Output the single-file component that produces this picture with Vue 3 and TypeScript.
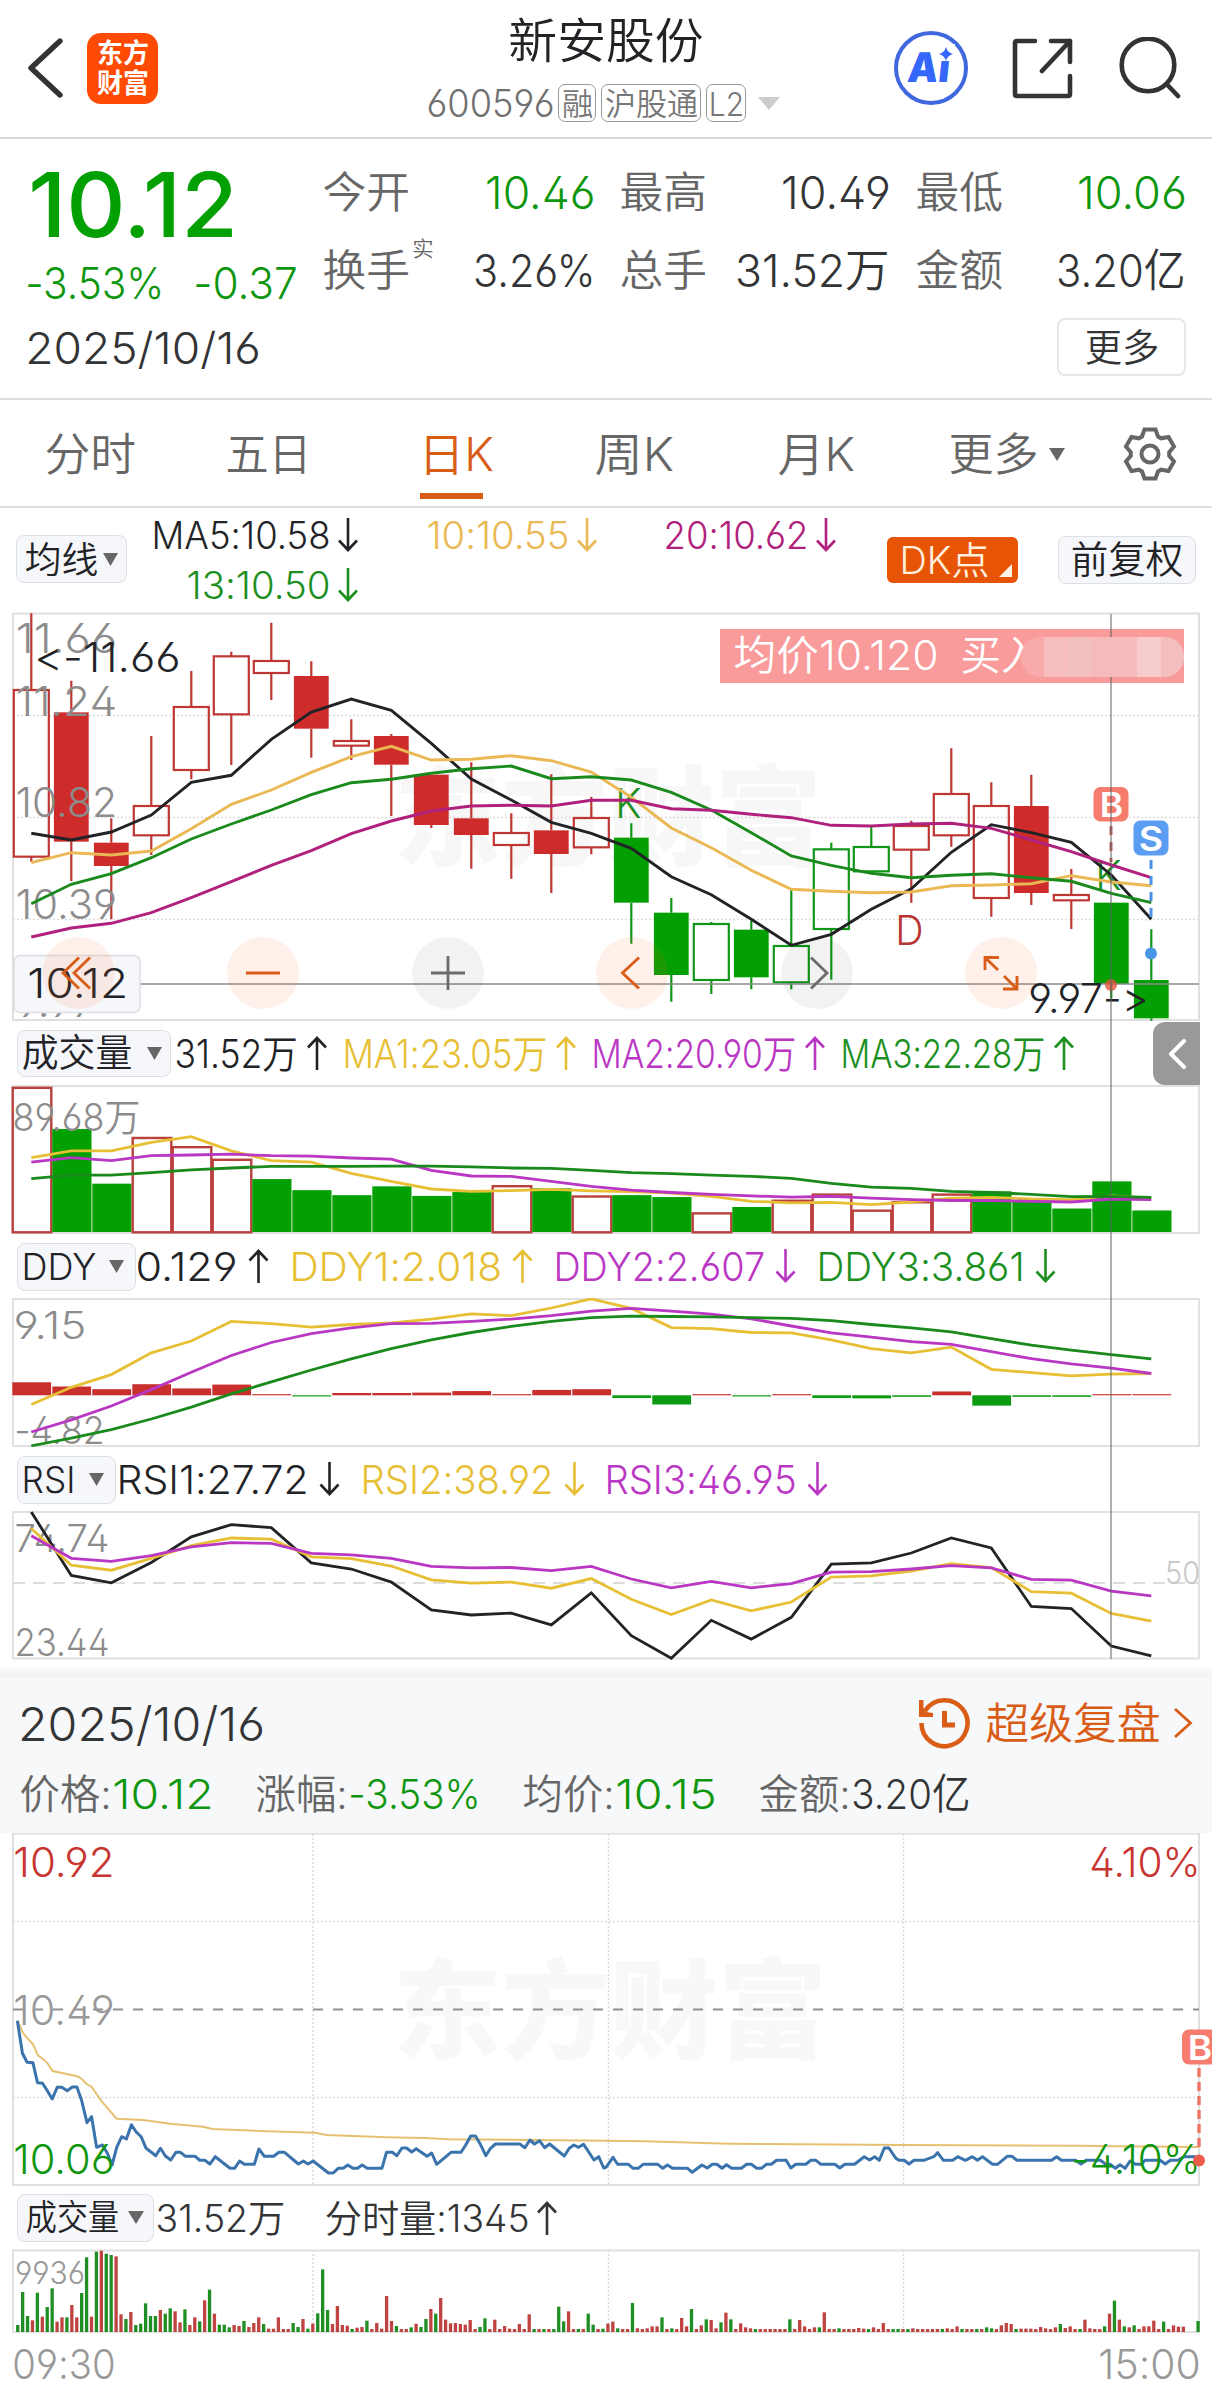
<script setup lang="ts">
import { h } from 'vue'

const GREEN = '#0f960f'
const INK = '#222326'
const TEXT = '#333436'
const GREY = '#666'
const AXIS = '#8c8c8c'
const GOLD = '#e7bf35'
const AMBER = '#eab854'
const VIOLET = '#b937c3'
const PLUM = '#b0207c'
const ORANGE = '#d95c17'
const LEAF = '#1c8f1f'

interface TextProps {
  t: string
  w: number
  s: number
  x?: number
  y?: number
  c?: string
  b?: number
}

/* Side bearing of a glyph, as a fraction of the font size */
const bearing = (ch: string) => (/[\u4e00-\u9fff]/.test(ch) ? 0.035 : 0.065)

/* Text fitted to a width; x is the visible left edge and y the baseline. */
const T = (p: TextProps) => {
  const left = bearing(p.t[0]) * p.s
  const right = bearing(p.t[p.t.length - 1]) * p.s
  return h(
    'text',
    {
      x: (p.x ?? 0) - left,
      y: p.y ?? 0,
      'font-size': p.s,
      'font-weight': p.b ?? 350,
      fill: p.c ?? INK,
      textLength: p.w + left + right,
      lengthAdjust: 'spacingAndGlyphs',
    },
    p.t,
  )
}
T.props = ['t', 'w', 's', 'x', 'y', 'c', 'b']

/* The same text as a box that takes part in the surrounding layout. */
const Label = (p: TextProps) =>
  h('svg', { width: p.w, height: p.s, style: { display: 'block', overflow: 'visible', flex: 'none' } }, [
    h(T, { ...p, x: 0, y: p.s * 0.8635 }),
  ])
Label.props = ['t', 'w', 's', 'c', 'b']

const Arrow = (p: { up?: boolean; c: string; w?: number }) =>
  h('svg', { width: p.w ?? 20, height: 34, viewBox: '0 0 20 34', style: { display: 'block', flex: 'none' } }, [
    h('path', {
      d: p.up ? 'M10 34V2M1 11.5L10 2L19 11.5' : 'M10 0V32M1 22.5L10 32L19 22.5',
      fill: 'none',
      stroke: p.c,
      'stroke-width': 2.6,
    }),
  ])
Arrow.props = ['up', 'c', 'w']

const Caret = (p: { c?: string; w?: number }) =>
  h('svg', { width: p.w ?? 15, height: 13, viewBox: '0 0 15 13', preserveAspectRatio: 'none', style: { display: 'block', flex: 'none' } }, [
    h('path', { d: 'M0 0H15L7.5 13Z', fill: p.c ?? GREY }),
  ])
Caret.props = ['c', 'w']

const cx = (i: number) => 31.3 + 40 * i
const line = (ys: number[], base: number, k: number) =>
  ys.map((v, i) => `${cx(i).toFixed(1)},${(base + v / k).toFixed(1)}`).join(' ')

/* high, body top, body bottom, low, kind (upper case = filled) */
type Candle = [number, number, number, number, string]
const rawCandles: Candle[] = [
  [40, 270, 770, 785, 'r'], [242, 337, 725, 843, 'R'], [655, 728, 798, 958, 'R'], [408, 618, 706, 765, 'r'],
  [213, 321, 510, 538, 'r'], [155, 169, 343, 495, 'r'], [68, 183, 219, 300, 'r'], [184, 228, 386, 473, 'R'],
  [358, 423, 437, 480, 'r'], [402, 408, 494, 648, 'R'], [524, 524, 675, 684, 'R'], [487, 655, 705, 806, 'R'],
  [640, 699, 735, 836, 'r'], [523, 691, 762, 879, 'R'], [590, 654, 742, 763, 'r'], [670, 713, 908, 1031, 'G'],
  [894, 938, 1125, 1205, 'G'], [966, 972, 1140, 1182, 'g'], [963, 989, 1132, 1168, 'G'], [870, 1038, 1147, 1168, 'g'],
  [728, 748, 987, 1139, 'g'], [678, 741, 814, 814, 'g'], [662, 678, 749, 908, 'r'], [445, 582, 706, 740, 'r'],
  [547, 618, 894, 950, 'r'], [524, 618, 879, 915, 'R'], [807, 885, 901, 987, 'r'], [908, 908, 1152, 1196, 'G'],
  [988, 1140, 1255, 1262, 'G'],
]
const candles = rawCandles.map(([hi, top, bot, lo, k], i) => {
  const filled = k === k.toUpperCase()
  const red = k.toLowerCase() === 'r'
  return {
    x: cx(i),
    hi: 600 + hi / 3,
    top: 600 + top / 3,
    bot: 600 + bot / 3,
    lo: 600 + lo / 3,
    filled,
    stroke: red ? '#bf3733' : '#12961a',
    fill: red ? '#ce2b2b' : '#02a002',
  }
})

const maLines = [
  { c: INK, p: line([700, 720, 696, 645, 547, 526, 418, 336, 297, 331, 430, 537, 600, 667, 700, 745, 830, 884, 958, 1036, 1003, 928, 866, 757, 674, 698, 727, 825, 958], 600, 3) },
  { c: AMBER, p: line([788, 758, 765, 753, 686, 613, 570, 517, 470, 439, 480, 478, 467, 482, 516, 592, 684, 743, 811, 868, 874, 878, 876, 857, 855, 851, 827, 846, 857], 600, 3) },
  { c: '#1a8a1d', p: line([911, 853, 821, 773, 717, 672, 630, 584, 548, 538, 520, 506, 498, 536, 530, 540, 577, 630, 698, 768, 796, 820, 833, 826, 821, 833, 844, 880, 908], 600, 3) },
  { c: PLUM, p: line([1011, 984, 970, 938, 893, 845, 796, 752, 701, 663, 633, 618, 616, 618, 601, 601, 626, 631, 643, 653, 676, 678, 672, 670, 685, 720, 755, 795, 833], 600, 3) },
]

const K = 2.613
const volBars = 'r44 g154 g297 r175 r199 r232 g285 g314 g327 g304 g329 g319 r301 g309 r328 g327 g332 r372 g358 r339 r323 r365 r343 r323 g317 g340 g362 g291 g367'
  .split(' ')
  .map((s, i) => ({ x: cx(i) - 18.8, y: 1070 + Number(s.slice(1)) / K, red: s[0] === 'r' }))
const volLines = [
  { c: GOLD, p: line([229, 211, 211, 189, 174, 211, 237, 241, 270, 291, 311, 317, 315, 312, 316, 318, 322, 330, 343, 347, 346, 352, 345, 335, 333, 337, 339, 329, 335], 1070, K) },
  { c: VIOLET, p: line([241, 229, 237, 224, 222, 220, 224, 225, 230, 233, 262, 277, 278, 291, 304, 314, 320, 325, 329, 332, 330, 335, 339, 341, 341, 343, 345, 337, 339], 1070, K) },
  { c: '#1a8a1d', p: line([284, 275, 275, 268, 261, 256, 252, 252, 252, 251, 251, 253, 256, 257, 262, 268, 271, 275, 278, 283, 296, 306, 309, 317, 320, 325, 331, 330, 333], 1070, K) },
]

const ddyBars = [34, 23, 16, 29, 18, 28, 3, -3, 6, 6, 7, 11, 3, 14, 16, -7, -24, 3, -3, 3, -7, -8, -4, 10, -27, -4, -4, 3, 3].map((v, i) => ({
  x: cx(i) - 19,
  y: 1395.3 - Math.max(v, 0) / K,
  h: Math.abs(v) / K,
  c: v > 0 ? '#c92f2d' : '#0b9a10',
}))
const ddyLines = [
  { c: GOLD, p: line([874, 829, 796, 739, 708, 657, 663, 672, 665, 661, 651, 637, 642, 622, 598, 623, 673, 676, 686, 687, 705, 728, 739, 724, 782, 791, 799, 795, 793], 1070, K) },
  { c: VIOLET, p: line([946, 914, 878, 835, 790, 746, 712, 689, 674, 663, 662, 657, 651, 642, 630, 623, 630, 638, 650, 669, 687, 698, 710, 717, 736, 754, 768, 779, 793], 1070, K) },
  { c: '#1a8a1d', p: line([982, 962, 940, 912, 881, 846, 815, 784, 755, 728, 705, 686, 670, 657, 647, 643, 644, 645, 647, 649, 655, 665, 674, 684, 702, 719, 732, 744, 755], 1070, K) },
]
const rsiLines = [
  { c: INK, p: line([1155, 1321, 1340, 1287, 1220, 1188, 1196, 1288, 1304, 1338, 1411, 1424, 1419, 1450, 1366, 1478, 1537, 1438, 1487, 1430, 1291, 1288, 1262, 1223, 1249, 1402, 1407, 1505, 1531], 1070, K) },
  { c: GOLD, p: line([1198, 1294, 1307, 1276, 1243, 1223, 1226, 1272, 1277, 1296, 1332, 1341, 1338, 1354, 1329, 1383, 1423, 1385, 1413, 1390, 1325, 1322, 1309, 1290, 1300, 1363, 1367, 1420, 1440], 1070, K) },
  { c: VIOLET, p: line([1217, 1276, 1284, 1269, 1246, 1235, 1237, 1263, 1267, 1276, 1297, 1301, 1300, 1308, 1297, 1330, 1353, 1336, 1353, 1342, 1312, 1311, 1304, 1295, 1301, 1331, 1333, 1362, 1374], 1070, K) },
]

/* Intraday series: pairs of x and y in chart units */
const trace = (s: string) =>
  s
    .split(' ')
    .map((q) => {
      const [a, b] = q.split(',').map(Number)
      return `${(a / 2.5874).toFixed(1)},${(2030 + b / 3).toFixed(1)}`
    })
    .join(' ')
const priceLine = trace(
  '45,-28 58,70 70,97 85,98 97,158 110,160 123,183 135,207 148,172 160,172 174,182 187,171 199,171 211,210 225,278 237,260 250,352 265,345 278,370 290,405 302,352 315,320 327,327 340,284 352,305 365,320 378,355 390,365 403,377 415,355 428,378 442,390 455,367 467,367 480,379 505,379 517,391 530,391 543,402 557,380 595,415 607,415 620,393 632,403 658,403 670,357 684,379 708,379 722,367 736,367 772,402 785,393 797,402 810,393 850,429 862,429 875,415 888,415 900,405 913,415 925,415 937,405 950,415 988,415 1000,367 1015,367 1027,377 1040,354 1052,354 1065,366 1077,356 1105,379 1117,369 1130,403 1167,367 1193,367 1205,345 1218,318 1230,318 1243,343 1257,377 1269,355 1282,342 1345,342 1358,353 1371,330 1383,342 1396,332 1409,353 1422,342 1460,378 1473,355 1485,345 1497,352 1510,343 1537,390 1549,380 1562,414 1568,412 1586,382 1598,403 1626,403 1638,415 1651,415 1664,403 1702,403 1715,415 1727,405 1740,415 1779,415 1791,427 1816,405 1830,414 1843,403 1855,403 1868,415 1880,404 1893,415 1918,415 1932,403 1944,403 1958,415 1970,415 1983,403 1996,403 2009,391 2034,391 2046,414 2059,403 2085,403 2098,391 2111,391 2124,403 2160,403 2173,414 2186,403 2211,403 2236,380 2250,390 2263,380 2275,391 2288,354 2300,354 2318,385 2326,391 2340,391 2352,402 2365,391 2390,391 2416,380 2426,368 2441,391 2465,391 2478,380 2498,391 2516,380 2529,391 2542,380 2568,403 2581,403 2606,379 2618,379 2631,391 2721,391 2734,380 2746,391 2783,391 2797,402 2810,391 2848,391 2861,403 2873,403 2886,415 2898,404 2911,415 2924,393 2938,403 2953,403 2963,391 3002,391 3015,402 3028,391 3048,391 3063,380 3093,380 3102,391',
)
const avgLine = trace(
  '45,-28 60,10 75,30 85,42 98,76 112,88 123,100 136,123 200,139 211,146 225,163 237,170 262,213 302,266 370,270 440,281 525,290 550,297 690,304 815,308 845,315 1000,322 1100,324 1160,328 1568,332 1668,334 1888,341 2068,343 2338,345 2798,347 2888,349 3102,351',
)
const minuteBars = (
  'g885 g786 g858 r871 g788 r860 g831 g775 r875 r862 g862 r825 r862 g789 g682 r860 g665 r662 g671 g675 r679 r853 g867 r846 g885 g881 g820 g858 g858 r840 g851 g835 r844 r877 g838 r885 r862 g874 r811 g779 r851 g884 g884 g892 r885 r888 g873 r891 r879 r862 g882 r896 r896 r862 r897 r897 g879 g891 r867 g896 ' +
  'r881 g850 g718 g840 r882 r828 r885 r887 g897 r893 r891 g872 r897 r879 r896 r798 r873 g888 r897 r897 g892 r881 g891 g867 r837 g851 r804 r869 r880 r879 r882 r884 r870 r897 g891 g865 r897 r869 r897 r888 r896 r897 r882 r897 r853 g897 r897 g897 r897 g897 g830 g874 r844 r897 g897 r897 g851 g884 r897 g896 ' +
  'r881 r875 g895 r897 r897 g819 r895 r897 r895 r889 r889 g862 r897 g895 r897 r864 r889 g837 r897 r886 g868 r870 r895 g877 r848 g868 r897 r880 r892 r895 g897 r897 r897 r897 r897 r897 r897 g868 r897 r870 r889 r897 r892 g892 r847 r897 r897 g895 r897 r897 r897 r894 r896 g897 r892 r897 r879 r897 g897 g897 ' +
  'r897 g897 r895 r897 r897 r897 r897 r897 g897 r895 r897 r889 g897 r897 r897 g897 r897 g892 g895 r897 r886 r879 r882 g897 r896 r896 r896 r897 r891 r895 r897 r892 g882 r894 r889 r897 g897 r869 r895 r897 r897 g889 r851 g812 r869 g889 r892 g886 r897 r889 r889 r872 r897 g875 r897 r886 r890 r890 r906 r906 g873'
)
  .split(' ')
  .map((s, i) => {
    const v = Number(s.slice(1))
    return { x: (46 + 12.725 * i) / 2.5874 - 1.7, y: 2030 + v / 3, h: (906 - v) / 3, c: s[0] === 'r' ? '#bf4340' : '#1f8f24' }
  })

const gear = Array.from({ length: 6 }, (_, i) => {
  const rot = ((i * 60 - 90) * Math.PI) / 180
  return [[-8, 17.5], [-5.5, 24.5], [5.5, 24.5], [8, 17.5]]
    .map(([t, r]) => `${(28 + r * Math.cos(rot) - t * Math.sin(rot)).toFixed(1)},${(28 + r * Math.sin(rot) + t * Math.cos(rot)).toFixed(1)}`)
    .join(' ')
}).join(' ')

const axisMain: [string, number][] = [['11.66', 653], ['11.24', 715.5], ['10.82', 817], ['10.39', 919], ['9.97', 1017]]

const quotes = [
  { l: '今开', v: '10.46', w: 104.5, c: GREEN },
  { l: '最高', v: '10.49', w: 104, c: TEXT },
  { l: '最低', v: '10.06', w: 104, c: GREEN },
  { l: '换手', v: '3.26%', w: 116.5, c: TEXT, sup: '实' },
  { l: '总手', v: '31.52万', w: 150, c: TEXT },
  { l: '金额', v: '3.20亿', w: 125, c: TEXT },
]
const volLegend = [
  { t: '31.52万', w: 119.5, c: INK },
  { t: 'MA1:23.05万', w: 201, c: GOLD },
  { t: 'MA2:20.90万', w: 201, c: VIOLET },
  { t: 'MA3:22.28万', w: 201, c: LEAF },
]
const ddyLegend = [
  { t: '0.129', w: 97, c: INK, up: true },
  { t: 'DDY1:2.018', w: 207.5, c: GOLD, up: true },
  { t: 'DDY2:2.607', w: 206.5, c: VIOLET, up: false },
  { t: 'DDY3:3.861', w: 203, c: LEAF, up: false },
]
const rsiLegend = [
  { t: 'RSI1:27.72', w: 187, c: INK },
  { t: 'RSI2:38.92', w: 188, c: GOLD },
  { t: 'RSI3:46.95', w: 187, c: VIOLET },
]
const summary = [
  { l: '价格:', v: '10.12', w: 96, c: GREEN },
  { l: '涨幅:', v: '-3.53%', w: 127, c: GREEN },
  { l: '均价:', v: '10.15', w: 96, c: GREEN },
  { l: '金额:', v: '3.20亿', w: 115, c: TEXT },
]
</script>

<template>
  <main class="page">
    <header class="header">
      <svg class="back" width="36" height="62" viewBox="0 0 36 62"><path d="M33 4L4 31L33 58" fill="none" stroke="#333" stroke-width="5.4" stroke-linecap="round" stroke-linejoin="round" /></svg>
      <div class="logo">
        <Label t="东方" :w="50" :s="27" c="#fff" :b="700" />
        <Label t="财富" :w="50" :s="27" c="#fff" :b="700" />
      </div>
      <div class="title">
        <Label t="新安股份" :w="192" :s="48" />
        <div class="code">
          <Label t="600596" :w="123" :s="38" c="#707070" />
          <span class="tags">
            <span class="tag"><Label t="融" :w="29" :s="31" c="#777" /></span>
            <span class="tag"><Label t="沪股通" :w="91" :s="31" c="#777" /></span>
            <span class="tag"><Label t="L2" :w="31" :s="33" c="#777" /></span>
          </span>
          <Caret c="#ccc" :w="22" />
        </div>
      </div>
      <div class="tools">
        <svg width="76" height="76" viewBox="0 0 76 76">
          <circle cx="38" cy="38" r="35" fill="none" stroke="#4068de" stroke-width="4" />
          <g transform="skewX(-6)">
            <text x="19" y="52" font-size="41" font-weight="900" fill="#3567fb" textLength="42" lengthAdjust="spacingAndGlyphs">Ai</text>
          </g>
          <path d="M45 14H62V31H45Z" fill="#fff" />
          <path d="M53 17Q54.5 22.500 60 24Q54.500 25.500 53 31Q51.500 25.500 46 24Q51.500 22.500 53 17Z" fill="#3567fb" />
        </svg>
        <svg width="62" height="62" viewBox="0 0 62 62" fill="none" stroke="#333" stroke-width="4.6" stroke-linecap="round" stroke-linejoin="round"><path d="M24 4H6Q4 4 4 6V57Q4 59 6 59H57Q59 59 59 57V39M40 4H59V25M59 4L31 34" /></svg>
        <svg width="62" height="62" viewBox="0 0 62 62" fill="none" stroke="#333" stroke-width="4.600" stroke-linecap="round"><circle cx="29" cy="28" r="26.300" /><path d="M47.500 47L59 59" /></svg>
      </div>
    </header>

    <section class="quote">
      <div class="price">
        <div class="big"><Label t="10.12" :w="198" :s="90" c="#02a002" :b="530" /></div>
        <div class="change">
          <Label t="-3.53%" :w="133.500" :s="43" :c="GREEN" />
          <Label t="-0.37" :w="99" :s="43" :c="GREEN" />
        </div>
        <Label t="2025/10/16" :w="230" :s="44" :c="TEXT" />
      </div>
      <div class="stats">
        <div v-for="q in quotes" :key="q.l" class="stat">
          <div class="stat-name">
            <Label :t="q.l" :w="84.500" :s="43" :c="GREY" />
            <Label v-if="q.sup" class="sup" :t="q.sup" :w="20" :s="21" :c="GREY" />
          </div>
          <Label :t="q.v" :w="q.w" :s="45" :c="q.c" />
        </div>
        <button class="more"><Label t="更多" :w="72" :s="38" :c="TEXT" /></button>
      </div>
    </section>

    <nav class="tabs">
      <Label t="分时" :w="88.500" :s="45" :c="GREY" />
      <Label t="五日" :w="83" :s="45" :c="GREY" />
      <div class="tab-on"><Label t="日K" :w="71" :s="46" :c="ORANGE" /></div>
      <Label t="周K" :w="75" :s="46" :c="GREY" />
      <Label t="月K" :w="73" :s="46" :c="GREY" />
      <div class="tab-more"><Label t="更多" :w="87" :s="45" :c="GREY" /><Caret :w="16" /></div>
      <svg class="gear" width="56" height="56" viewBox="0 0 56 56" fill="none" stroke="#666" stroke-width="4"><polygon :points="gear" /><circle cx="28" cy="28" r="8.500" /></svg>
    </nav>

    <section class="kline">
      <div class="ma-row">
        <button class="pick pick-ma"><Label t="均线" :w="71" :s="36.500" /><Caret /></button>
        <div class="ma-grid">
          <span class="leg"><Label t="MA5:10.58" :w="174" :s="38" /><Arrow :c="INK" /></span>
          <span class="leg"><Label t="10:10.55" :w="138" :s="38" :c="AMBER" /><Arrow :c="AMBER" /></span>
          <span class="leg"><Label t="20:10.62" :w="140" :s="38" :c="PLUM" /><Arrow :c="PLUM" /></span>
          <span class="leg"><Label t="13:10.50" :w="139" :s="38" :c="LEAF" /><Arrow :c="LEAF" /></span>
        </div>
        <button class="dk"><Label t="DK点" :w="86" :s="38" c="#ffefdd" /><svg class="corner" width="13" height="13"><path d="M13 0V13H0Z" fill="#fff3e6" /></svg></button>
        <button class="pick fq"><Label t="前复权" :w="110" :s="37.500" /></button>
      </div>

      <svg class="chart" width="1212" height="410" viewBox="0 612 1212 410">
        <T t="东方财富" :x="398" :y="857" :w="420" :s="108" :b="900" c="#f7f7f7" />
        <g stroke="#dcdcdc" stroke-width="1.500" stroke-dasharray="2 2"><path d="M13 715.500H1199M13 817.500H1199M13 919.500H1199" /></g>
        <path d="M13 613.500H1199V1020H13Z" fill="none" stroke="#dfdfdf" stroke-width="2" />
        <g v-for="(k, i) in candles" :key="i" stroke-width="2.200" :stroke="k.stroke">
          <path :d="`M${k.x} ${k.hi}V${k.top}M${k.x} ${k.bot}V${k.lo}`" />
          <rect v-if="k.filled" :x="k.x - 17.400" :y="k.top" width="34.800" :height="k.bot - k.top" :fill="k.fill" stroke="none" />
          <rect v-else :x="k.x - 17.500" :y="k.top" width="35" :height="k.bot - k.top" fill="none" />
        </g>
        <T v-for="a in axisMain" :key="a[0]" :t="a[0]" :x="18.500" :y="a[1]" :w="a[0] === '9.97' ? 76 : 96" :s="41" :c="AXIS" />
        <T t="K" :x="618" :y="818" :w="21" :s="41" :c="LEAF" />
        <T t="K" :x="1098" :y="890" :w="21" :s="41" :c="LEAF" />
        <T t="D" :x="898" :y="945" :w="23" :s="41" c="#b83232" />
        <polyline v-for="(m, i) in maLines" :key="i" :points="m.p" fill="none" :stroke="m.c" stroke-width="2.900" />
        <T t="&lt;-11.66" :x="37" :y="672" :w="141" :s="41" />
        <path d="M140 984H1199" stroke="#8b8b8b" stroke-width="1.500" />
        <path d="M1111 826V862" stroke="#c0605c" stroke-width="3" stroke-dasharray="9 7" />
        <path d="M1151 860V918" stroke="#4c90e8" stroke-width="3" stroke-dasharray="9 7" />
        <circle cx="1151" cy="953.500" r="6" fill="#4a96e6" />
        <g>
          <rect x="1093.500" y="787" width="35" height="34.500" rx="7" fill="#f67d6d" />
          <T t="B" :x="1102" :y="816.500" :w="19" :s="34" c="#fff" :b="600" />
          <rect x="1133.500" y="820.500" width="35" height="35" rx="7" fill="#5b9df3" />
          <T t="S" :x="1141" :y="850.500" :w="20" :s="34" c="#fff" :b="600" />
        </g>
        <rect x="720" y="629" width="464" height="54" fill="#f99b9b" />
        <T t="均价10.120" :x="735" :y="670" :w="201" :s="41" c="#fff" />
        <T t="买入" :x="962" :y="670" :w="78" :s="41" c="#fff" />
        <rect x="14" y="955.500" width="126" height="57" rx="6" fill="#f6f7fa" stroke="#dcdee2" stroke-width="1.500" />
        <T t="10.12" :x="30" :y="998" :w="95.500" :s="41" />
        <g fill="#fb6a28" fill-opacity=".1">
          <circle cx="78.500" cy="973" r="36" /><circle cx="263" cy="973" r="36" /><circle cx="632" cy="973" r="36" /><circle cx="1001" cy="973" r="36" />
        </g>
        <g fill="#000" fill-opacity=".05"><circle cx="448" cy="973" r="36" /><circle cx="817" cy="973" r="36" /></g>
        <g fill="none" :stroke="ORANGE" stroke-width="2.800">
          <path d="M79 957.500L63 973L79 988.500M90 957.500L74 973L90 988.500M246 973H280M639 957.500L622.500 973L639 988.500" />
          <path d="M985 970V957.500H999M985 957.500L998 970M1017 976V989H1003M1017 989L1004 976" />
        </g>
        <path d="M431 973H465M448 956V990M811 957.500L827 973L811 988.500" fill="none" stroke="#6b6b6b" stroke-width="2.800" />
        <T t="9.97->" :x="1031" :y="1012.500" :w="115" :s="41" />
        <circle cx="1111" cy="985" r="6" fill="#e2553e" fill-opacity=".8" />
      </svg>

      <div class="row vol-row">
        <button class="pick pick-vol"><Label t="成交量" :w="108" :s="37.500" /><Caret /></button>
        <span v-for="l in volLegend" :key="l.t" class="leg"><Label :t="l.t" :w="l.w" :s="39" :c="l.c" /><Arrow :up="true" :c="l.c" /></span>
      </div>
      <svg class="chart" width="1212" height="149" viewBox="0 1085 1212 149">
        <path d="M13 1086H1199V1233H13Z" fill="none" stroke="#e0e0e0" stroke-width="1.800" />
        <g v-for="(b, i) in volBars" :key="i">
          <rect v-if="b.red" :x="b.x + 0.200" :y="b.y + 1" width="38.600" :height="1231.300 - b.y" fill="none" stroke="#b9403b" stroke-width="2.400" />
          <rect v-else :x="b.x - 0.200" :y="b.y" width="39.200" :height="1232 - b.y" fill="#02a002" />
        </g>
        <T t="89.68万" :x="15" :y="1131" :w="124" :s="38" :c="AXIS" />
        <polyline v-for="(m, i) in volLines" :key="i" :points="m.p" fill="none" :stroke="m.c" stroke-width="2.800" />
      </svg>

      <div class="row wide-row">
        <button class="pick pick-ddy"><Label t="DDY" :w="70" :s="37" /><Caret /></button>
        <span v-for="l in ddyLegend" :key="l.t" class="leg"><Label :t="l.t" :w="l.w" :s="40" :c="l.c" /><Arrow :up="l.up" :c="l.c" :w="21" /></span>
      </div>
      <svg class="chart" width="1212" height="149" viewBox="0 1298 1212 149">
        <path d="M13 1299H1199V1446H13Z" fill="none" stroke="#e0e0e0" stroke-width="1.800" />
        <rect v-for="(b, i) in ddyBars" :key="i" :x="b.x" :y="b.y" width="38.800" :height="b.h" :fill="b.c" />
        <T t="9.15" :x="16" :y="1339" :w="68" :s="38" :c="AXIS" />
        <T t="-4.82" :x="17" :y="1444" :w="85" :s="38" :c="AXIS" />
        <polyline v-for="(m, i) in ddyLines" :key="i" :points="m.p" fill="none" :stroke="m.c" stroke-width="2.800" />
      </svg>

      <div class="row wide-row">
        <button class="pick pick-rsi"><Label t="RSI" :w="49" :s="37" /><Caret /></button>
        <span v-for="l in rsiLegend" :key="l.t" class="leg"><Label :t="l.t" :w="l.w" :s="40" :c="l.c" /><Arrow :c="l.c" :w="21" /></span>
      </div>
      <svg class="chart" width="1212" height="154" viewBox="0 1511 1212 154">
        <path d="M13 1512H1199V1658.500H13Z" fill="none" stroke="#e0e0e0" stroke-width="1.800" />
        <path d="M13 1583H1199" stroke="#dcdcdc" stroke-width="1.800" stroke-dasharray="12 8" />
        <T t="74.74" :x="17" :y="1552" :w="90" :s="38" :c="AXIS" />
        <T t="23.44" :x="17" :y="1655.500" :w="90" :s="38" :c="AXIS" />
        <T t="50" :x="1167" :y="1583.500" :w="31" :s="31" c="#c9c9c9" />
        <polyline v-for="(m, i) in rsiLines" :key="i" :points="m.p" fill="none" :stroke="m.c" stroke-width="2.800" />
      </svg>
      <i class="cursor"></i>
      <div class="mask"><i></i><i></i><i></i><i></i><i></i><i></i><i></i></div>
      <div class="handle"><svg width="20" height="30" viewBox="0 0 20 30"><path d="M17 2L4 15L17 28" fill="none" stroke="#fff" stroke-width="4" stroke-linecap="round" stroke-linejoin="round" /></svg></div>
    </section>

    <section class="panel">
      <div class="panel-top">
        <Label t="2025/10/16" :w="241" :s="47" :c="TEXT" />
        <div class="replay">
          <svg width="52" height="52" viewBox="0 0 52 52" fill="none" :stroke="ORANGE" stroke-width="4.600"><path d="M7 14A23 23 0 1 1 3.500 26" /><path d="M26.500 14V28H37" stroke-width="5" /><path d="M1 3V20H15V16L8 15L5.500 11V3Z" :fill="ORANGE" stroke="none" /></svg>
          <Label t="超级复盘" :w="172" :s="43.500" :c="ORANGE" />
          <svg width="20" height="32" viewBox="0 0 20 32" fill="none" :stroke="ORANGE" stroke-width="2.800"><path d="M2 2L17.500 16L2 30" /></svg>
        </div>
      </div>
      <div class="panel-row">
        <span v-for="s in summary" :key="s.l" class="pair"><Label :t="s.l" :w="88" :s="40.500" :c="GREY" /><Label :t="s.v" :w="s.w" :s="41.500" :c="s.c" /></span>
      </div>
    </section>

    <section class="intraday">
      <svg class="chart" width="1212" height="353" viewBox="0 1833 1212 353">
        <T t="东方财富" :x="397" :y="2050" :w="426" :s="108" :b="900" c="#f8f8f8" />
        <g stroke="#dadada" stroke-width="1.500" stroke-dasharray="2 2"><path d="M13 1921.500H1199M13 2097.500H1199M313 1834V2185M608.500 1834V2185M903.500 1834V2185" /></g>
        <path d="M13 1833.500H1199V2185H13Z" fill="none" stroke="#dfdfe2" stroke-width="2" />
        <path d="M13 2009.500H1199" stroke="#8f8f8f" stroke-width="2" stroke-dasharray="10 10" />
        <polyline :points="avgLine" fill="none" stroke="#e6c071" stroke-width="2" />
        <polyline :points="priceLine" fill="none" stroke="#3b73ad" stroke-width="3" stroke-linejoin="round" />
        <T t="10.92" :x="16" :y="1877" :w="96" :s="41" c="#c83430" />
        <T t="4.10%" :x="1092" :y="1877" :w="106" :s="41" c="#c83430" />
        <T t="10.49" :x="16" :y="2025" :w="96" :s="41" c="#999" />
        <T t="10.06" :x="16" :y="2173.500" :w="96" :s="41" c="#0f960f" />
        <T t="-4.10%" :x="1074" :y="2173.500" :w="124" :s="41" c="#0f960f" />
        <path d="M1199 2068V2150" stroke="#ee7466" stroke-width="3.400" stroke-dasharray="9 5" />
        <circle cx="1199" cy="2160.500" r="6" fill="#ee5c4c" />
        <rect x="1182" y="2029.500" width="35" height="35" rx="7" fill="#f67d6d" />
        <T t="B" :x="1190" :y="2059.500" :w="20" :s="34" c="#fff" :b="600" />
      </svg>
      <div class="row min-row">
        <button class="pick pick-min"><Label t="成交量" :w="91" :s="35" /><Caret :w="16" /></button>
        <Label t="31.52万" :w="126" :s="38" :c="TEXT" />
        <span class="leg"><Label t="分时量:1345" :w="201" :s="38" :c="TEXT" /><Arrow :up="true" :c="TEXT" /></span>
      </div>
      <svg class="chart" width="1212" height="84" viewBox="0 2249 1212 84">
        <path d="M313 2250V2332M608.500 2250V2332M903.500 2250V2332" stroke="#dadada" stroke-width="1.500" stroke-dasharray="2 2" />
        <path d="M13 2250.500H1199V2332H13Z" fill="none" stroke="#e0e0e0" stroke-width="1.800" />
        <T t="9936" :x="17" :y="2284" :w="66" :s="31" c="#999" />
        <rect v-for="(b, i) in minuteBars" :key="i" :x="b.x" :y="b.y" width="3.300" :height="b.h" :fill="b.c" />
      </svg>
      <div class="times">
        <Label t="09:30" :w="98" :s="41" c="#999" />
        <Label t="15:00" :w="97" :s="41" c="#999" />
      </div>
    </section>
  </main>
</template>

<style>
body {
  background: #fff;
}
</style>

<style scoped>
.page {
  width: 1212px;
  height: 2394px;
  overflow: hidden;
  background: #fff;
  font-family: Inter, "Noto Sans CJK SC", sans-serif;
  font-feature-settings: "calt" 0, "cv02" 1, "cv03" 1, "cv04" 1;
}
.page * {
  box-sizing: border-box;
}
button {
  font: inherit;
  font-feature-settings: inherit;
  padding: 0;
  margin: 0;
}
.header {
  height: 139px;
  border-bottom: 2px solid #dadada;
  display: flex;
  align-items: flex-start;
}
.back {
  margin: 37px 0 0 27px;
}
.logo {
  width: 71px;
  height: 71px;
  margin: 33px 0 0 24px;
  border-radius: 14px;
  background: #fe4a02;
  display: flex;
  flex-direction: column;
  align-items: center;
  justify-content: center;
  gap: 3px;
}
.title {
  width: 352px;
  margin: 17px 0 0 271px;
  display: flex;
  flex-direction: column;
  gap: 19px;
}
.title > :first-child {
  margin-left: 81px;
}
.code {
  display: flex;
  align-items: center;
  gap: 6px;
  height: 38px;
}
.tags {
  display: flex;
  gap: 5px;
  margin-right: 6px;
}
.tag {
  height: 38px;
  padding: 0 3.5px;
  border: 1.5px solid #999;
  border-radius: 7px;
  display: flex;
  align-items: center;
}
.tools {
  display: flex;
  align-items: center;
  margin: 30px 0 0 112px;
}
.tools svg + svg {
  margin-left: 42px;
}
.tools svg + svg + svg {
  margin-left: 46px;
}
.quote {
  height: 261px;
  border-bottom: 2px solid #dedede;
  display: flex;
}
.price {
  width: 324px;
  padding: 20px 0 0 28px;
}
.big {
  padding-left: 6px;
}
.change {
  display: flex;
  gap: 34px;
  margin: 13px 0 21px;
}
.stats {
  width: 862px;
  padding-top: 25px;
  display: grid;
  grid-template-columns: 268px 267px 267px;
  grid-template-rows: 56px 78px 59px;
  column-gap: 29px;
  align-content: start;
}
.stat {
  display: flex;
  justify-content: space-between;
  align-items: center;
}
.stat:nth-child(n + 4) {
  padding-top: 23px;
}
.stat-name {
  display: flex;
  gap: 4px;
}
.sup {
  margin-top: -11px;
}
.more {
  grid-column: 3;
  justify-self: end;
  width: 129px;
  height: 58px;
  margin: 20px -2px 0 0;
  border: 2px solid #e6e7e9;
  border-radius: 8px;
  background: #fff;
  display: flex;
  align-items: center;
  justify-content: center;
}
.tabs {
  height: 108px;
  border-bottom: 2px solid #dedede;
  display: flex;
  align-items: center;
  padding: 2px 0 0 46px;
}
.tabs > :nth-child(2) {
  margin-left: 92.5px;
}
.tabs > :nth-child(3) {
  margin-left: 110px;
}
.tabs > :nth-child(4) {
  margin-left: 104.5px;
}
.tabs > :nth-child(5) {
  margin-left: 108px;
}
.tab-on {
  height: 104px;
  display: flex;
  align-items: center;
  background: linear-gradient(#d95c17, #d95c17) 0 91px / 63px 6px no-repeat;
}
.tab-more {
  display: flex;
  align-items: center;
  gap: 12px;
  margin-left: 98px;
}
.gear {
  margin-left: 57px;
}
.kline {
  position: relative;
}
.ma-row {
  height: 104px;
  display: flex;
  align-items: flex-start;
  padding-left: 16px;
}
.pick {
  height: 48px;
  border: 1.5px solid #dcdfe3;
  border-radius: 8px;
  background: #f6f7fa;
  display: flex;
  align-items: center;
  flex: none;
}
.pick-ma {
  width: 111px;
  margin-top: 27px;
  padding-left: 9px;
  gap: 6px;
}
.ma-grid {
  display: grid;
  grid-template-columns: 230.5px 239px 239px;
  grid-template-rows: 50px 50px;
  justify-items: end;
  align-items: center;
  padding-top: 2px;
}
.leg {
  display: flex;
  align-items: center;
  gap: 10px;
}
.dk {
  width: 131px;
  height: 46px;
  margin: 29px 0 0 51px;
  padding: 0 6px 0 15px;
  border: 0;
  border-radius: 6px;
  background: #e85405;
  display: flex;
  align-items: center;
  justify-content: space-between;
}
.corner {
  align-self: flex-end;
  margin-bottom: 6px;
}
.fq {
  width: 138px;
  margin: 28px 0 0 40px;
  justify-content: center;
}
.chart {
  display: block;
}
.row {
  display: flex;
  align-items: center;
  padding-left: 16.5px;
}
.vol-row {
  height: 63px;
  gap: 18px;
  padding-bottom: 1px;
}
.pick-vol {
  width: 154px;
  height: 47px;
  margin-right: -11.5px;
  padding-left: 5px;
  gap: 16px;
}
.wide-row {
  height: 64px;
  gap: 22.5px;
}
.wide-row .leg {
  gap: 13px;
  margin-top: -1px;
}
.pick-ddy {
  width: 119px;
  margin: 1px -20px 0 0;
  padding-left: 6px;
  gap: 15px;
}
.pick-rsi {
  width: 99px;
  margin: 1px -19px 0 0;
  padding-left: 6px;
  gap: 16px;
}
.min-row {
  height: 63px;
}
.pick-min {
  width: 137px;
  padding-left: 9px;
  gap: 10px;
  margin-right: 4px;
}
.min-row .leg {
  margin-left: 42px;
}
.cursor {
  position: absolute;
  left: 1110px;
  top: 106px;
  width: 2px;
  height: 1045px;
  background: rgba(95, 95, 95, 0.5);
}
.mask {
  position: absolute;
  left: 1021px;
  top: 129px;
  width: 163px;
  height: 40px;
  border-radius: 20px;
  overflow: hidden;
  display: flex;
  background: #f6bcbc;
}
.mask i {
  flex: 1;
}
.mask i:nth-child(1) {
  background: #f8a9a9;
}
.mask i:nth-child(2) {
  background: #f5bdbd;
}
.mask i:nth-child(3) {
  background: #f3c0c0;
}
.mask i:nth-child(4) {
  background: #f5baba;
}
.mask i:nth-child(6) {
  background: #f6cccc;
}
.mask i:nth-child(7) {
  background: #f5bebe;
}
.handle {
  position: absolute;
  right: 12px;
  top: 514px;
  width: 47px;
  height: 63px;
  border-radius: 12px 0 0 12px;
  background: #999;
  display: flex;
  align-items: center;
  padding-left: 14px;
}
.panel {
  height: 168px;
  padding-top: 12px;
  background: linear-gradient(#fff, #f1f1f1) 0 0 / 100% 12px no-repeat, #f7f8fa;
}
.panel-top {
  height: 92px;
  padding: 0 19px 0 21px;
  display: flex;
  align-items: center;
  justify-content: space-between;
}
.replay {
  display: flex;
  align-items: center;
}
.replay svg:nth-child(1) {
  margin-right: 17px;
}
.replay svg:nth-child(3) {
  margin-left: 14px;
}
.panel-row {
  display: flex;
  gap: 46px;
  padding-left: 21px;
  margin-top: 4px;
}
.pair {
  display: flex;
  align-items: center;
  gap: 6px;
}
.times {
  display: flex;
  justify-content: space-between;
  padding: 11px 14px 0 15px;
}
</style>
